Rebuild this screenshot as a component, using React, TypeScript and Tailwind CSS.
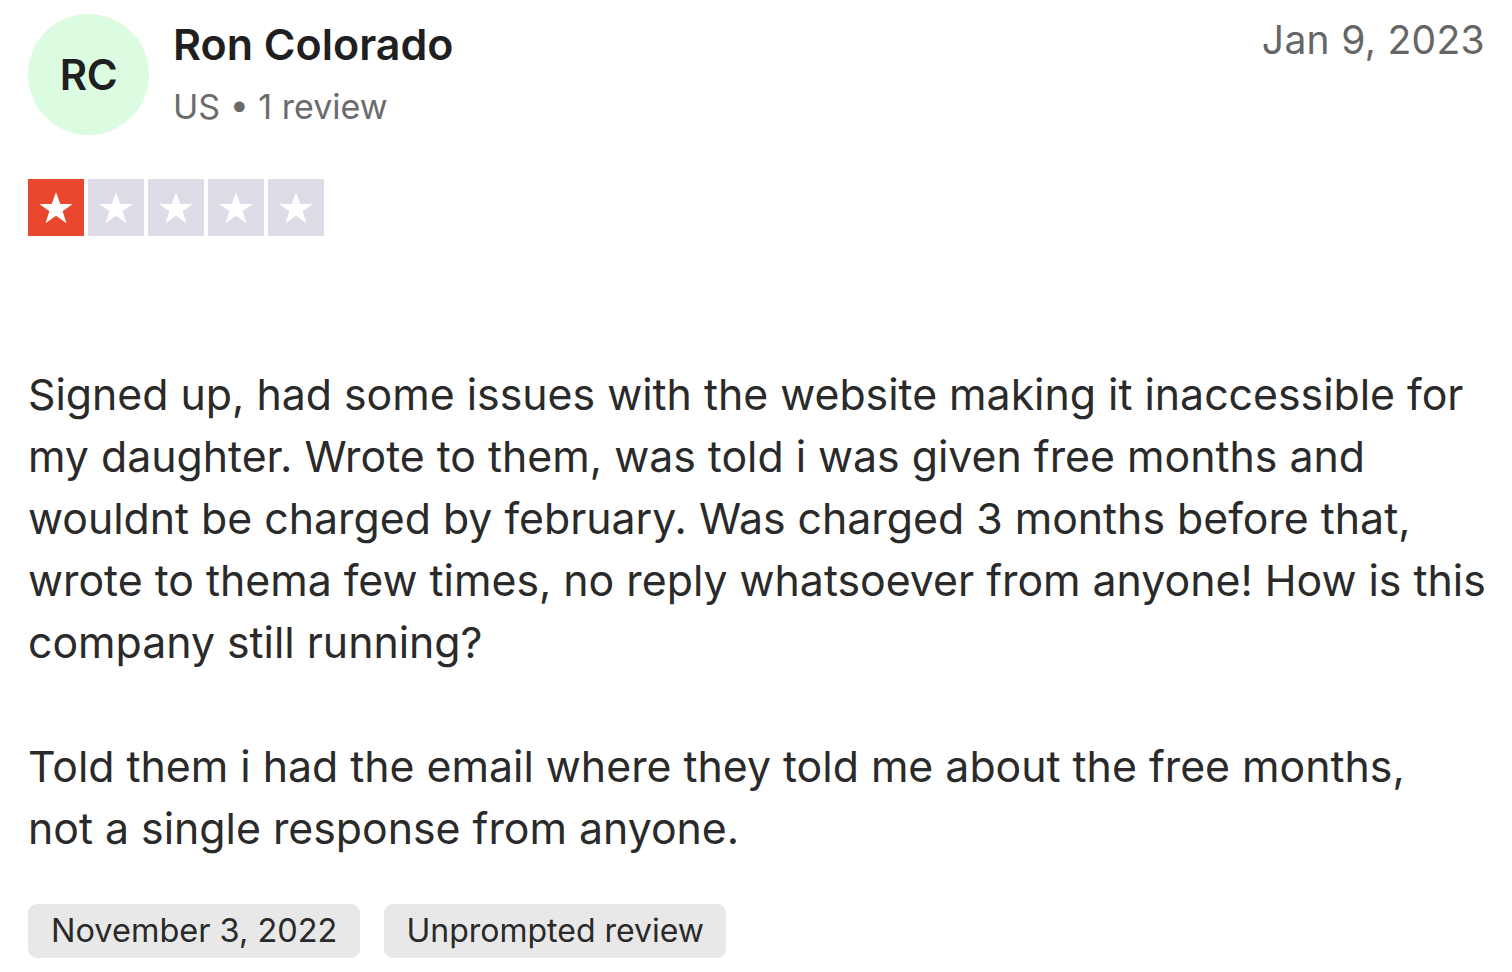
import React from "react";

function Star({ filled }: { filled: boolean }) {
  return (
    <div
      className={
        "flex h-[57px] w-[56px] items-center justify-center " +
        (filled ? "bg-[#e9482f]" : "bg-[#dcdce6]")
      }
    >
      <svg viewBox="0 0 24 24" className="h-[40px] w-[40px]" fill="#ffffff">
        <path d="M12 2.6l2.55 7.02h7.45l-6.03 4.38 2.3 7.1L12 16.7l-6.27 4.4 2.3-7.1L2 9.62h7.45z" />
      </svg>
    </div>
  );
}

const para1 = [
  "Signed up, had some issues with the website making it inaccessible for",
  "my daughter. Wrote to them, was told i was given free months and",
  "wouldnt be charged by february. Was charged 3 months before that,",
  "wrote to thema few times, no reply whatsoever from anyone! How is this",
  "company still running?",
];
const para2 = [
  "Told them i had the email where they told me about the free months,",
  "not a single response from anyone.",
];

export default function App() {
  return (
    <div className="h-[972px] w-[1512px] overflow-hidden bg-white pl-[28px] pr-[27px] pt-[14px] font-['Inter',sans-serif] text-[#2a2a2a]">
      <div className="flex items-start justify-between">
        <div className="flex items-start gap-[24px]">
          <div className="flex h-[121px] w-[121px] items-center justify-center rounded-full bg-[#dcfce2] text-[42px] font-semibold tracking-[-0.5px] text-[#1f1f1f]">
            RC
          </div>
          <div className="flex flex-col pt-[2px]">
            <div className="text-[43px] font-semibold leading-[56px] text-[#1f1f1f]">
              Ron Colorado
            </div>
            <div className="mt-[15px] text-[34px] leading-[40px] text-[#6b6b6b]">
              US • 1 review
            </div>
          </div>
        </div>
        <div className="pt-[2px] text-[39px] leading-[48px] tracking-[0.3px] text-[#666666]">
          Jan 9, 2023
        </div>
      </div>

      <div className="mt-[44px] flex gap-[4px]">
        <Star filled />
        <Star filled={false} />
        <Star filled={false} />
        <Star filled={false} />
        <Star filled={false} />
      </div>

      <div className="mt-[128px] whitespace-nowrap text-[42.8px] leading-[62px] text-[#2a2a2a]">
        <p>
          {para1.map((l, i) => (
            <span key={i} className="block">
              {l}
            </span>
          ))}
        </p>
        <p className="mt-[62px]">
          {para2.map((l, i) => (
            <span key={i} className="block">
              {l}
            </span>
          ))}
        </p>
      </div>

      <div className="mt-[44px] flex gap-[24px]">
        <div className="flex h-[54px] items-center rounded-[9px] bg-[#e8e8e8] px-[23px] text-[32.5px] text-[#2a2a2a]">
          November 3, 2022
        </div>
        <div className="flex h-[54px] items-center rounded-[9px] bg-[#e8e8e8] px-[22px] text-[32px] text-[#2a2a2a]">
          Unprompted review
        </div>
      </div>
    </div>
  );
}
